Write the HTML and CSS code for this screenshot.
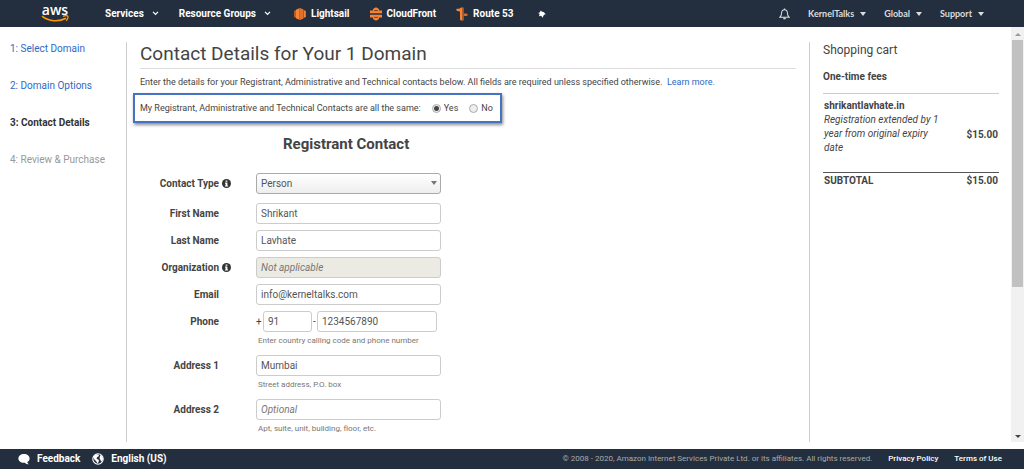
FILE: index.html
```html
<!DOCTYPE html>
<html lang="en">

<head>
    <meta charset="UTF-8">
    <meta name="viewport" content="width=device-width, initial-scale=1.0">
    <title>Contact Details</title>
    <link rel="stylesheet" href="styles.css">
</head>

<body>
    <header class="topnav">
        <a href="#" class="logo" aria-label="aws">
            <span class="logo-text">aws</span>
            <svg class="logo-smile" viewBox="0 0 28 8" width="28" height="8">
                <path d="M1 1.2C8 6.8 18 7 25 3.2" fill="none" stroke="#f90" stroke-width="1.6" />
                <path d="M22 1.4c2-.9 4-1 4.7-.3.5.8 0 3-1.5 4.7" fill="none" stroke="#f90" stroke-width="1.3" />
            </svg>
        </a>
        <nav class="menu">
            <button type="button">Services
                <svg class="chev" viewBox="0 0 8 6" width="7" height="5"><path d="M1 1l3 3 3-3" fill="none" stroke="#fff" stroke-width="1.5" /></svg>
            </button>
            <button type="button">Resource Groups
                <svg class="chev" viewBox="0 0 8 6" width="7" height="5"><path d="M1 1l3 3 3-3" fill="none" stroke="#fff" stroke-width="1.5" /></svg>
            </button>
        </nav>
        <nav class="shortcuts">
            <a href="#">
                <svg viewBox="0 0 12 14" width="12" height="14">
                    <path d="M0 4l2-1v8l-2-1z" fill="#c15b1b" />
                    <path d="M2 2.7L5.700 1v12L2 11.300z" fill="#f58536" />
                    <path d="M6 1l3.500 1.500v9L6 13z" fill="#e0702a" />
                    <path d="M9.700 3l2.100 1v6l-2.100 1z" fill="#f58536" />
                </svg>
                Lightsail
            </a>
            <a href="#">
                <svg viewBox="0 0 12 14" width="12" height="14">
                    <path d="M3 2l3-1.800L9 2v1.500h3v2.700H0V3.500h3z" fill="#f58536" />
                    <path d="M3 12l3 1.800L9 12v-1.500h3V7.800H0v2.700h3z" fill="#f58536" />
                    <path d="M4 3.600h4M4 10.400h4" stroke="#8c3d12" stroke-width="1" />
                </svg>
                CloudFront
            </a>
            <a href="#">
                <svg viewBox="0 0 12 14" width="12" height="14">
                    <path d="M4 1l2.600-.8v13.600L4 13z" fill="#f58536" />
                    <path d="M6.600.2l1.200.6v12.400l-1.200.6z" fill="#c15b1b" />
                    <path d="M0 2l4-.6v3L1 4z" fill="#f58536" />
                    <path d="M7.800 6.600h3l1.200 1.200L10.800 9h-3z" fill="#d86a26" />
                </svg>
                Route 53
            </a>
            <button type="button" class="pin" aria-label="Pin shortcuts">
                <svg viewBox="0 0 8 8" width="8" height="8">
                    <path d="M2.600.4l1.600 1.400 1.400.2L7.800 4.200 6.400 4.600 5.200 6l-.2 1.800L3 5.800 1 6.200 1.600 4 .2 3l1.800-.8z" fill="#fff" />
                </svg>
            </button>
        </nav>
        <nav class="account">
            <button type="button" class="bell" aria-label="Notifications">
                <svg viewBox="0 0 12 13" width="11" height="12">
                    <path d="M1 10h10c-1.400-1.200-1.800-2.400-1.800-4.600C9.200 3.200 8 1.900 6 1.900S2.800 3.200 2.800 5.400C2.800 7.600 2.400 8.800 1 10z" fill="none" stroke="#ddd" stroke-width="1.100" />
                    <path d="M6 .4v1.400M4.700 11.400h2.600" stroke="#ddd" stroke-width="1.400" />
                </svg>
            </button>
            <button type="button">KernelTalks <i class="caret"></i></button>
            <button type="button">Global <i class="caret"></i></button>
            <button type="button">Support <i class="caret"></i></button>
        </nav>
    </header>

    <div class="page">
        <aside class="steps">
            <ol>
                <li><a href="#">1: Select Domain</a></li>
                <li><a href="#">2: Domain Options</a></li>
                <li class="active">3: Contact Details</li>
                <li class="disabled">4: Review &amp; Purchase</li>
            </ol>
        </aside>

        <main class="details">
            <h1>Contact Details for Your 1 Domain</h1>
            <p class="intro">Enter the details for your Registrant, Administrative and Technical contacts below. All fields are required unless specified otherwise. &nbsp;<a href="#">Learn more.</a></p>

            <form>
                <div class="same-contacts" role="radiogroup" aria-labelledby="same-label">
                    <span id="same-label">My Registrant, Administrative and Technical Contacts are all the same:</span>
                    <label><input type="radio" name="same" checked>Yes</label>
                    <label><input type="radio" name="same">No</label>
                </div>

                <h2>Registrant Contact</h2>

                <div class="row row-type">
                    <label for="type">Contact Type</label>
                    <svg class="info" viewBox="0 0 10 10" width="9" height="9"><circle cx="5" cy="5" r="5" fill="#333" /><path d="M4 1.600h2v1.400H4zM3.400 4H6v3.200h.8v1.200H3.300V7.200H4V5.200h-.6z" fill="#fff" /></svg>
                    <div class="select">
                        <select id="type">
                            <option>Person</option>
                        </select>
                        <i class="caret"></i>
                    </div>
                </div>
                <div class="row">
                    <label for="first">First Name</label>
                    <input type="text" id="first" value="Shrikant">
                </div>
                <div class="row">
                    <label for="last">Last Name</label>
                    <input type="text" id="last" value="Lavhate">
                </div>
                <div class="row">
                    <label for="org">Organization</label>
                    <svg class="info" viewBox="0 0 10 10" width="9" height="9"><circle cx="5" cy="5" r="5" fill="#333" /><path d="M4 1.600h2v1.400H4zM3.400 4H6v3.200h.8v1.200H3.300V7.200H4V5.200h-.6z" fill="#fff" /></svg>
                    <input type="text" id="org" placeholder="Not applicable" disabled>
                </div>
                <div class="row">
                    <label for="email">Email</label>
                    <input type="text" id="email" value="info@kerneltalks.com">
                </div>
                <div class="row">
                    <label for="phone">Phone</label>
                    <div class="phone">
                        <span>+</span>
                        <input type="text" class="code" value="91" aria-label="Country calling code">
                        <span>-</span>
                        <input type="text" id="phone" value="1234567890">
                    </div>
                    <small>Enter country calling code and phone number</small>
                </div>
                <div class="row">
                    <label for="address1">Address 1</label>
                    <input type="text" id="address1" value="Mumbai">
                    <small>Street address, P.O. box</small>
                </div>
                <div class="row">
                    <label for="address2">Address 2</label>
                    <input type="text" id="address2" placeholder="Optional">
                    <small>Apt, suite, unit, building, floor, etc.</small>
                </div>
            </form>
        </main>

        <aside class="cart">
            <h3>Shopping cart</h3>
            <h4>One-time fees</h4>
            <table>
                <tbody>
                    <tr>
                        <td class="item"><b>shrikantlavhate.in</b><em>Registration extended by 1 year from original expiry date</em></td>
                        <td class="price">$15.00</td>
                    </tr>
                </tbody>
                <tfoot>
                    <tr>
                        <th>SUBTOTAL</th>
                        <td class="price">$15.00</td>
                    </tr>
                </tfoot>
            </table>
        </aside>

        <div class="scrollbar">
            <i class="arrow up"></i>
            <div class="thumb"></div>
            <i class="arrow down"></i>
        </div>
    </div>

    <footer class="bottom">
        <a href="#">
            <svg viewBox="0 0 12 12" width="12" height="12"><path d="M6 1c3.200 0 5.600 2 5.600 4.400 0 1.600-1 2.900-2.400 3.700.2.900.8 1.600 1.600 2.200-1.500 0-2.900-.5-3.900-1.500H6C2.800 9.800.4 7.800.4 5.400S2.800 1 6 1z" fill="#fff" /></svg>
            Feedback
        </a>
        <a href="#">
            <svg viewBox="0 0 12 12" width="12" height="12"><circle cx="6" cy="6" r="5.200" fill="#232f3e" stroke="#fff" stroke-width="1.100" /><path d="M1.500 3.600L4 1.300l2.500.2.500 1.500-2 1.200L4.600 6l1.800.6.600 1.500-1.400 2.600-1.200-2.300L2 6zM8.400 2l2 2 .7 2.200-1.700 2.500-1-1.800L7.500 5z" fill="#fff" /></svg>
            English (US)
        </a>
        <span class="copy">© 2008 - 2020, Amazon Internet Services Private Ltd. or its affiliates. All rights reserved.</span>
        <a href="#" class="legal">Privacy Policy</a>
        <a href="#" class="legal">Terms of Use</a>
    </footer>
</body>

</html>
```
FILE: styles.css
```css
* {
    box-sizing: border-box;
    padding: 0;
    margin: 0;
}

body {
    display: flex;
    flex-direction: column;
    height: 100vh;
    overflow: hidden;
    font: 10px/14px Roboto, sans-serif;
    color: #444;
    background: #fff;
}

a {
    color: #2f68c5;
    text-decoration: none;
}

button {
    border: 0;
    background: none;
    color: inherit;
    font: inherit;
    cursor: pointer;
}

ol {
    list-style: none;
}

/* top bar */

.topnav {
    display: flex;
    align-items: center;
    flex: none;
    height: 27px;
    padding-left: 41px;
    background: #232f3e;
    color: #fff;
    font-weight: 700;
    white-space: nowrap;
}

.topnav a,
.topnav button {
    display: flex;
    align-items: center;
    color: #fff;
}

.topnav .logo {
    flex-direction: column;
    width: 28px;
    margin-right: 36px;
}

.logo-text {
    font: 600 14px/10px "Open Sans", sans-serif;
}

.menu {
    display: flex;
    gap: 20px;
}

.menu button {
    gap: 8px;
}

.shortcuts {
    display: flex;
    gap: 20px;
    margin-left: 23px;
}

.shortcuts a {
    gap: 5px;
}

.shortcuts .pin {
    margin-left: 4px;
}

.account {
    display: flex;
    gap: 18px;
    margin-left: auto;
    padding-right: 40px;
    font: 700 9px/14px Lato, sans-serif;
}

.account button {
    gap: 6px;
}

.account button,
.account .caret {
    color: #ddd;
}

.caret {
    border: 3px solid transparent;
    border-top: 4px solid currentColor;
    border-bottom: 0;
}

/* page columns */

.page {
    display: flex;
    flex: 1;
    min-height: 0;
    padding-bottom: 7px;
}

.steps {
    flex: none;
    width: 126px;
    padding: 15px 10px;
}

.steps li {
    height: 37px;
}

.steps .active {
    color: #333;
    font-weight: 700;
}

.steps .disabled {
    color: #999;
}

.details {
    flex: 1;
    margin-top: 15px;
    padding: 0 13px;
    border-left: 1px solid #ccc;
    overflow: hidden;
}

h1 {
    padding-bottom: 2px;
    border-bottom: 1px solid #ddd;
    font-size: 19px;
    font-weight: 400;
    line-height: 24px;
}

.intro {
    margin-top: 6px;
    font-size: 9px;
}

.same-contacts {
    display: flex;
    align-items: center;
    width: max-content;
    height: 30px;
    margin: 4px 0 0 -7px;
    padding: 0 7px 0 5px;
    border: 2px solid #4472c4;
    box-shadow: 1px 2px 3px rgba(0, 0, 0, .45);
    font-size: 9px;
}

.same-contacts label {
    display: flex;
    align-items: center;
    margin-left: 11px;
}

.same-contacts input {
    appearance: none;
    width: 9px;
    height: 9px;
    margin-right: 3px;
    border: 1px solid #aaa;
    border-radius: 50%;
    background: #eee;
}

.same-contacts input:checked {
    background: radial-gradient(#444 0 2px, #eee 3px);
}

h2 {
    margin: 12px 0 20px 143px;
    font-size: 15px;
    line-height: 18px;
}

.row {
    display: grid;
    grid-template-columns: 79px 37px 185px;
    align-items: center;
    margin-bottom: 6px;
}

.row-type {
    margin-bottom: 9px;
}

.row > label {
    font-weight: 700;
    text-align: right;
}

.row > .info {
    margin-left: 3px;
}

.row > input,
.select,
.phone {
    grid-column: 3;
}

input[type=text],
select {
    width: 100%;
    height: 21px;
    padding: 0 4px;
    border: 1px solid #ccc;
    border-radius: 3px;
    background: #fff;
    color: #555;
    font: 10px Roboto, sans-serif;
}

input::placeholder {
    color: #777;
    font-style: italic;
}

input[type=text]:disabled {
    background: #ebebe4;
}

.select {
    position: relative;
}

select {
    appearance: none;
    display: block;
    border-color: #aaa;
    background: linear-gradient(#fff, #eee);
}

.select .caret {
    position: absolute;
    top: 8px;
    right: 4px;
    color: #777;
}

.phone {
    display: flex;
    align-items: center;
    gap: 1px;
    padding-right: 4px;
}

.phone span {
    width: 6px;
    flex: none;
}

.phone span + input + span {
    width: 3px;
}

.phone .code {
    flex: none;
    width: 49px;
}

small {
    grid-column: 3;
    padding: 1px 2px;
    color: #777;
    font-size: 8px;
    line-height: 15px;
}

/* cart */

.cart {
    flex: none;
    width: 202px;
    margin-top: 15px;
    padding: 0 12px 0 13px;
    border-left: 1px solid #ccc;
}

h3 {
    font-size: 12px;
    font-weight: 400;
    line-height: 16px;
}

h4 {
    margin-top: 12px;
    padding-bottom: 9px;
    border-bottom: 1px solid #ccc;
    font-size: 10px;
    line-height: 14px;
}

table {
    width: 100%;
    border-collapse: collapse;
}

td,
th {
    padding: 1px;
    text-align: left;
}

.item {
    width: 122px;
    padding: 5px 1px 17px;
}

.item b,
.item em {
    display: block;
}

.price {
    font-weight: 700;
    text-align: right;
}

tbody .price {
    padding-top: 4px;
}

tfoot tr {
    border-top: 1px solid #555;
}

/* scrollbar */

.scrollbar {
    display: flex;
    flex-direction: column;
    align-items: center;
    flex: none;
    width: 13px;
    padding: 6px 0 4px;
    background: #f1f1f1;
}

.arrow {
    border: 3px solid transparent;
}

.up {
    border-top: 0;
    border-bottom-color: #999;
}

.down {
    margin-top: auto;
    border-bottom: 0;
    border-top-color: #444;
}

.thumb {
    width: 11px;
    height: 61%;
    margin-top: 4px;
    background: #c1c1c1;
}

/* bottom bar */

.bottom {
    display: flex;
    align-items: center;
    flex: none;
    height: 20px;
    padding: 0 22px 0 18px;
    background: #232f3e;
    color: #aaa;
    font-size: 8px;
    white-space: nowrap;
}

.bottom a {
    display: flex;
    align-items: center;
    gap: 7px;
    margin-right: 12px;
    color: #fff;
    font-size: 10px;
    font-weight: 700;
}

.copy {
    margin-left: auto;
}

.bottom .legal {
    margin: 0 0 0 16px;
    font-size: 8px;
    font-weight: 500;
}
```
